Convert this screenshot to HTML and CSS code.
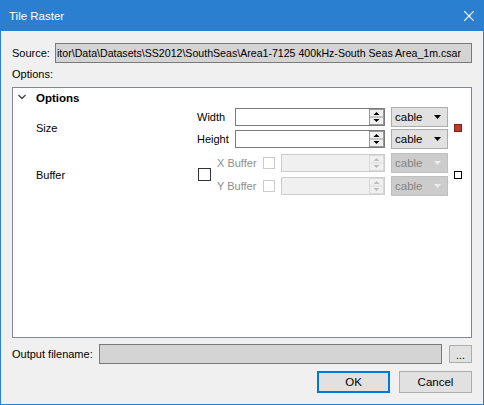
FILE: index.html
```html
<!DOCTYPE html>
<html>
<head>
<meta charset="utf-8">
<link rel="stylesheet" href="styles.css">
</head>
<body>
<div class="window">
  <div class="titlebar">
    <span class="title">Tile Raster</span>
    <svg class="close" width="10" height="10" viewBox="0 0 10 10"><path d="M0,0 L10,10 M10,0 L0,10" stroke="#fff" stroke-width="1.2"/></svg>
  </div>
  <div class="content">
    <div class="source-row">
      <span class="source-label">Source:</span>
      <div class="field field-ro source-field"><span class="field-text">itor\Data\Datasets\SS2012\SouthSeas\Area1-7125 400kHz-South Seas Area_1m.csar</span></div>
    </div>
    <div class="opt-label">Options:</div>
    <div class="panel">
      <div class="panel-head">
        <svg class="chev" width="8" height="6" viewBox="0 0 8 6"><path d="M0.5,1 L4,4.5 L7.5,1" fill="none" stroke="#444" stroke-width="1.4"/></svg>
        <span class="panel-title">Options</span>
      </div>
      <div class="section">
        <div class="sec-label">Size</div>
        <div class="rows">
          <div class="row">
            <span class="row-label">Width</span>
            <div class="spin-input spin-size">
              <svg class="spin" width="15" height="16" viewBox="0 0 15 16"><rect x="0.5" y="0.5" width="14" height="15" fill="#f0f0f0" stroke="#9a9a9a"/><line x1="1" y1="8" x2="14" y2="8" stroke="#9a9a9a"/><path d="M4.5 6 H10.5 L7.5 3 Z" fill="#000"/><path d="M4.5 10 H10.5 L7.5 13 Z" fill="#000"/></svg>
            </div>
            <div class="combo"><span>cable</span><svg class="arrow" width="7" height="4" viewBox="0 0 7 4"><path d="M0 0H7L3.5 4Z" fill="#000"/></svg></div>
          </div>
          <div class="row">
            <span class="row-label">Height</span>
            <div class="spin-input spin-size">
              <svg class="spin" width="15" height="16" viewBox="0 0 15 16"><rect x="0.5" y="0.5" width="14" height="15" fill="#f0f0f0" stroke="#9a9a9a"/><line x1="1" y1="8" x2="14" y2="8" stroke="#9a9a9a"/><path d="M4.5 6 H10.5 L7.5 3 Z" fill="#000"/><path d="M4.5 10 H10.5 L7.5 13 Z" fill="#000"/></svg>
            </div>
            <div class="combo"><span>cable</span><svg class="arrow" width="7" height="4" viewBox="0 0 7 4"><path d="M0 0H7L3.5 4Z" fill="#000"/></svg></div>
          </div>
        </div>
        <span class="indicator indicator-red"></span>
      </div>
      <div class="section section-buffer">
        <div class="sec-label">Buffer</div>
        <span class="check check-big"></span>
        <div class="rows rows-buffer">
          <div class="row">
            <span class="row-label row-label-dis">X Buffer</span>
            <span class="check check-dis"></span>
            <div class="spin-input spin-buffer spin-dis">
              <svg class="spin" width="15" height="16" viewBox="0 0 15 16"><rect x="0.5" y="0.5" width="14" height="15" fill="#f0f0f0" stroke="#d9d9d9"/><line x1="1" y1="8" x2="14" y2="8" stroke="#d9d9d9"/><path d="M4.5 6 H10.5 L7.5 3 Z" fill="#bcbcbc"/><path d="M4.5 10 H10.5 L7.5 13 Z" fill="#bcbcbc"/></svg>
            </div>
            <div class="combo combo-dis"><span>cable</span><svg class="arrow" width="7" height="4" viewBox="0 0 7 4"><path d="M0 0H7L3.5 4Z" fill="#ececec"/></svg></div>
          </div>
          <div class="row">
            <span class="row-label row-label-dis">Y Buffer</span>
            <span class="check check-dis"></span>
            <div class="spin-input spin-buffer spin-dis">
              <svg class="spin" width="15" height="16" viewBox="0 0 15 16"><rect x="0.5" y="0.5" width="14" height="15" fill="#f0f0f0" stroke="#d9d9d9"/><line x1="1" y1="8" x2="14" y2="8" stroke="#d9d9d9"/><path d="M4.5 6 H10.5 L7.5 3 Z" fill="#bcbcbc"/><path d="M4.5 10 H10.5 L7.5 13 Z" fill="#bcbcbc"/></svg>
            </div>
            <div class="combo combo-dis"><span>cable</span><svg class="arrow" width="7" height="4" viewBox="0 0 7 4"><path d="M0 0H7L3.5 4Z" fill="#ececec"/></svg></div>
          </div>
        </div>
        <span class="indicator indicator-white"></span>
      </div>
    </div>
    <div class="output-row">
      <span class="output-label">Output filename:</span>
      <div class="field field-ro output-field"></div>
      <button class="btn btn-browse">...</button>
    </div>
    <div class="button-row">
      <button class="btn btn-main btn-ok">OK</button>
      <button class="btn btn-main">Cancel</button>
    </div>
  </div>
</div>
</body>
</html>
```
FILE: styles.css
```css
body {
  margin: 0;
  font-family: "Liberation Sans", Arial, sans-serif;
  font-size: 11px;
  color: #000;
}
.window {
  width: 484px;
  height: 405px;
  box-sizing: border-box;
  border: 1px solid #2a7fd1;
  border-top: 0;
  background: #f0f0f0;
  display: flex;
  flex-direction: column;
}
.titlebar {
  height: 31px;
  flex: none;
  background: #2a7fd1;
  display: flex;
  align-items: center;
  justify-content: space-between;
  padding: 0 9px 0 8px;
  color: #fff;
  font-size: 11.5px;
}
.close { display: block; }
.content {
  padding: 12px 11px 0;
  display: flex;
  flex-direction: column;
}
.source-row {
  display: flex;
  align-items: center;
  height: 20px;
}
.source-label { width: 43px; flex: none; }
.field {
  box-sizing: border-box;
  border: 1px solid #7a7a7a;
  height: 20px;
}
.field-ro { background: #d4d4d4; }
.source-field {
  flex: 1;
  min-width: 0;
  display: flex;
  justify-content: flex-start;
  align-items: center;
  overflow: hidden;
  padding-left: 1px;
}
.field-text {
  white-space: nowrap;
  flex: none;
  font-size: 10.6px;
}
.opt-label {
  height: 14px;
  line-height: 14px;
  margin: 4px 0 6px;
}
.panel {
  height: 251px;
  box-sizing: border-box;
  border: 1px solid #828790;
  background: #fff;
}
.panel-head {
  height: 19px;
  display: flex;
  align-items: center;
  padding-left: 5px;
}
.chev { display: block; margin-right: 10px; margin-bottom: 2px; }
.panel-title { font-weight: bold; font-size: 11.5px; }
.section {
  display: flex;
  align-items: center;
}
.section-buffer { margin-top: 4px; }
.sec-label {
  width: 161px;
  padding-left: 23px;
  flex: none;
}
.rows {
  display: flex;
  flex-direction: column;
  gap: 2px;
}
.rows-buffer { gap: 3px; margin-left: 6px; }
.row {
  display: flex;
  align-items: center;
  height: 20px;
}
.row-label { width: 38px; flex: none; }
.row-label-dis { width: 46px; color: #8d8d8d; }
.spin-input {
  box-sizing: border-box;
  height: 18px;
  border: 1px solid #7a7a7a;
  background: #fff;
  display: flex;
  justify-content: flex-end;
  align-items: center;
  flex: none;
}
.spin-size { width: 150px; }
.spin-buffer { width: 104px; margin-left: 6px; }
.spin-dis { border-color: #cccccc; background: #f0f0f0; }
.spin { display: block; }
.combo {
  box-sizing: border-box;
  width: 57px;
  height: 20px;
  margin-left: 6px;
  border: 1px solid #adadad;
  background: #e1e1e1;
  display: flex;
  align-items: center;
  justify-content: space-between;
  padding: 0 6px 0 3px;
  flex: none;
  font-size: 11.5px;
}
.combo-dis {
  background: #cccccc;
  border-color: #bfbfbf;
  color: #838383;
}
.arrow { display: block; }
.check {
  box-sizing: border-box;
  display: block;
  background: #fff;
  flex: none;
}
.check-big {
  width: 13px;
  height: 13px;
  border: 1px solid #333;
  margin-left: 1px;
}
.check-dis {
  width: 12px;
  height: 12px;
  border: 1px solid #cccccc;
}
.indicator {
  width: 8px;
  height: 8px;
  box-sizing: border-box;
  margin-left: 6px;
  flex: none;
}
.indicator-red { background: #c0392b; border: 1px solid #7b2418; }
.indicator-white { background: #fff; border: 1px solid #000; }
.output-row {
  display: flex;
  align-items: center;
  height: 20px;
  margin-top: 6px;
}
.output-label { width: 87px; flex: none; }
.output-field { flex: 1; }
.btn {
  box-sizing: border-box;
  background: #e1e1e1;
  border: 1px solid #adadad;
  font: inherit;
  color: #000;
  padding: 0;
  margin: 0;
}
.btn-browse {
  width: 23px;
  height: 18px;
  margin-left: 7px;
  flex: none;
  line-height: 14px;
  padding-top: 2px;
}
.button-row {
  display: flex;
  justify-content: flex-end;
  gap: 9px;
  margin-top: 7px;
}
.btn-main {
  width: 73px;
  height: 22px;
  font-size: 11.5px;
}
.btn-ok { border: 2px solid #0078d7; }
```
